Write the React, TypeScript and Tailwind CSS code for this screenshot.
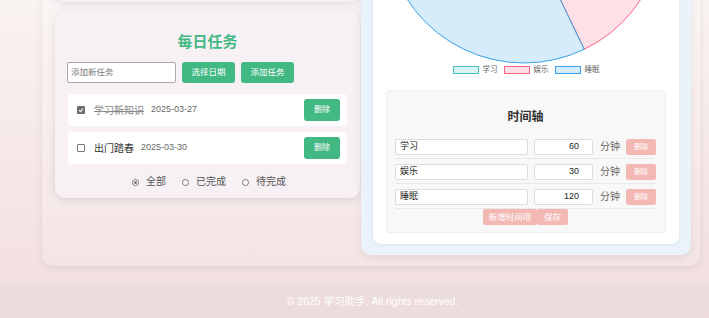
import React from "react";

const FONT = { fontFamily: '"Liberation Sans", "Noto Sans CJK SC", sans-serif' };

function arcPath(cx: number, cy: number, r: number, a0: number, a1: number) {
  const rad = (d: number) => (d * Math.PI) / 180;
  const x0 = cx + r * Math.cos(rad(a0));
  const y0 = cy + r * Math.sin(rad(a0));
  const x1 = cx + r * Math.cos(rad(a1));
  const y1 = cy + r * Math.sin(rad(a1));
  const large = a1 - a0 > 180 ? 1 : 0;
  return `M ${cx} ${cy} L ${x0} ${y0} A ${r} ${r} 0 ${large} 1 ${x1} ${y1} Z`;
}

const data = [
  { name: "学习", value: 60, fill: "rgba(75,192,192,0.2)", stroke: "rgb(75,192,192)" },
  { name: "娱乐", value: 30, fill: "rgba(255,99,132,0.2)", stroke: "rgb(255,99,132)" },
  { name: "睡眠", value: 120, fill: "rgba(54,162,235,0.2)", stroke: "rgb(54,162,235)" },
];

function Pie() {
  const total = data.reduce((s, d) => s + d.value, 0);
  let a = -90;
  const segs = data.map((d) => {
    const a0 = a;
    const a1 = a + (d.value / total) * 360;
    a = a1;
    return { ...d, a0, a1 };
  });
  return (
    <svg width="280" height="282" viewBox="0 0 280 282" className="block">
      {segs.map((s) => (
        <path key={s.name} d={arcPath(138, 142, 139, s.a0, s.a1)} fill={s.fill} stroke={s.stroke} strokeWidth="1" />
      ))}
    </svg>
  );
}

function Check({ checked }: { checked: boolean }) {
  return checked ? (
    <span className="w-[8px] h-[8px] rounded-[1px] bg-[#6e6e6e] flex items-center justify-center shrink-0">
      <svg width="6" height="6" viewBox="0 0 6 6">
        <path d="M1 3.2 L2.4 4.6 L5 1.6" stroke="#fff" strokeWidth="1.1" fill="none" />
      </svg>
    </span>
  ) : (
    <span className="w-[8px] h-[8px] rounded-[1px] border border-[#777] bg-white shrink-0" />
  );
}

function Radio({ checked, label }: { checked: boolean; label: string }) {
  return (
    <div className="flex items-center gap-[7px]">
      <span className="w-[7px] h-[7px] rounded-full border border-[#777] bg-white flex items-center justify-center">
        {checked && <span className="w-[3px] h-[3px] rounded-full bg-[#777]" />}
      </span>
      <span className="text-[10px] leading-[10px] text-[#555]">{label}</span>
    </div>
  );
}

function TaskRow({ done, text, date, mt }: { done: boolean; text: string; date: string; mt: string }) {
  return (
    <div className={`${mt} mx-[1px] h-[32px] bg-white rounded-[4px] flex items-center pl-[9px] pr-[7px]`}>
      <Check checked={done} />
      <span className={`ml-[9px] text-[10px] ${done ? "line-through text-[#888]" : "text-[#333]"}`}>{text}</span>
      <span className="ml-[7px] text-[9px] text-[#666]">{date}</span>
      <div className="flex-1" />
      <button className="w-[36px] h-[22px] rounded-[3px] bg-[#42b883] text-white text-[8px]">删除</button>
    </div>
  );
}

function TimeRow({ name, value }: { name: string; value: number }) {
  return (
    <div className="flex items-center pt-[5px] pb-[3px] border-b border-[#e9e9e9]">
      <div className="w-[133px] h-[16px] border border-[#ddd] rounded-[2px] bg-white pl-[4px] flex items-center text-[9px] text-[#222]">
        {name}
      </div>
      <div className="ml-[6px] w-[59px] h-[16px] border border-[#ddd] rounded-[2px] bg-white pr-[13px] flex items-center justify-end text-[9px] text-[#222]">
        {value}
      </div>
      <span className="ml-[7px] w-[20px] text-[10px] leading-[10px] text-[#666] whitespace-nowrap">分钟</span>
      <button className="ml-[6px] w-[30px] h-[16px] rounded-[2px] bg-[#f3b7b4] text-white text-[7px]">删除</button>
    </div>
  );
}

export default function App() {
  return (
    <div
      className="w-[709px] h-[318px] overflow-hidden flex flex-col bg-gradient-to-b from-[#f9f3f2] to-[#f2dddd]"
      style={FONT}
    >
      <div className="mt-[-250px] ml-[42px] w-[658px] shrink-0 rounded-[12px] bg-white/15 shadow-[0_2px_8px_rgba(0,0,0,0.07)] pt-[12px] pb-[11px] pl-[13px] pr-[9px] grid grid-cols-[305px_330px] gap-x-[1px] items-start">
        {/* left column */}
        <div className="flex flex-col">
          <div className="h-[240px] rounded-[10px] bg-[#f7f1f5] shadow-[0_2px_8px_rgba(0,0,0,0.1)]" />
          <div className="mt-[9px] h-[187px] rounded-[10px] bg-[#f7f1f5] shadow-[0_2px_8px_rgba(0,0,0,0.1)] px-[12px] pt-[23px] flex flex-col">
            <div className="text-center text-[15px] leading-[16px] font-bold text-[#42b883]">每日任务</div>
            <div className="mt-[12px] flex items-center h-[21px]">
              <div className="w-[109px] h-[21px] border border-[#a9a9a9] rounded-[2px] bg-white pl-[3px] flex items-center text-[8.5px] text-[#777]">
                添加新任务
              </div>
              <button className="ml-[6px] w-[53px] h-[21px] rounded-[3px] bg-[#42b883] text-white text-[8.5px]">选择日期</button>
              <button className="ml-[6px] w-[53px] h-[21px] rounded-[3px] bg-[#42b883] text-white text-[8.5px]">添加任务</button>
            </div>
            <TaskRow done text="学习新知识" date="2025-03-27" mt="mt-[11px]" />
            <TaskRow done={false} text="出门踏春" date="2025-03-30" mt="mt-[6px]" />
            <div className="mt-[13px] flex justify-center gap-[16px] pl-[3px]">
              <Radio checked label="全部" />
              <Radio checked={false} label="已完成" />
              <Radio checked={false} label="待完成" />
            </div>
          </div>
        </div>
        {/* right column */}
        <div className="rounded-[10px] bg-[#eaf3fc] shadow-[0_2px_8px_rgba(0,0,0,0.08)] px-[12px] pt-[12px] pb-[11px]">
          <div className="rounded-[8px] bg-white shadow-[0_1px_4px_rgba(0,0,0,0.06)] px-[13px] pt-[8px] pb-[11px]">
            <Pie />
            <div className="h-[12px] flex items-center justify-center gap-[6px] text-[7.5px] text-[#666]">
              {data.map((d) => (
                <div key={d.name} className="flex items-center gap-[4px]">
                  <span className="w-[26px] h-[8px] border" style={{ background: d.fill, borderColor: d.stroke }} />
                  <span>{d.name}</span>
                </div>
              ))}
            </div>
            <div className="mt-[14px] h-[143px] rounded-[4px] border border-[#eee] bg-[#f8f8f8] pl-[8px] pr-[9px] pt-[19px]">
              <div className="text-center text-[12px] leading-[14px] font-bold text-[#333]">时间轴</div>
              <div className="mt-[10px]">
                <TimeRow name="学习" value={60} />
                <TimeRow name="娱乐" value={30} />
                <TimeRow name="睡眠" value={120} />
              </div>
              <div className="flex justify-center">
                <button className="w-[54px] h-[16px] rounded-[2px] bg-[#f3b7b4] text-white text-[8.5px]">新增时间项</button>
                <button className="w-[31px] h-[16px] rounded-[2px] bg-[#f3b7b4] text-white text-[8.5px]">保存</button>
              </div>
            </div>
          </div>
        </div>
      </div>
      <div className="mt-[17px] h-[35px] shrink-0 bg-[#eddcdc] rounded-b-[6px] flex items-center justify-center pl-[36px] pt-[3px] text-[10.5px] text-white">
        © 2025 学习助手. All rights reserved.
      </div>
    </div>
  );
}
